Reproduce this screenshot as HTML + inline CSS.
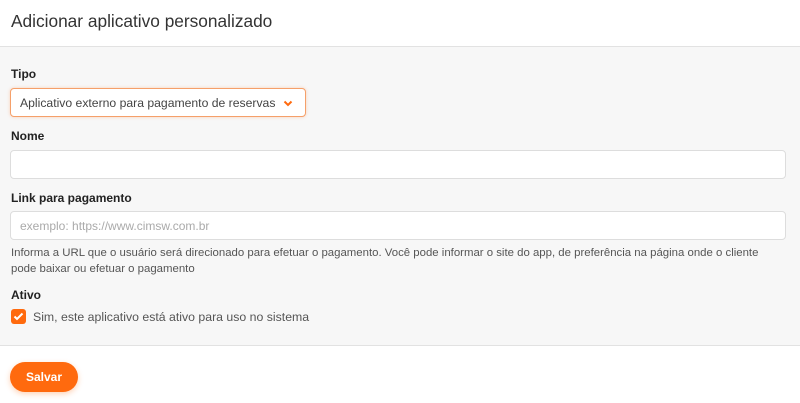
<!DOCTYPE html>
<html><head><meta charset="utf-8"><style>
*{box-sizing:border-box;margin:0;padding:0}
body{width:800px;height:403px;background:#fff;font-family:"Liberation Sans",sans-serif;color:#222;position:relative;overflow:hidden}
.hdr{height:47px;border-bottom:1px solid #e2e2e2;padding:11px 11px;font-size:17.3px;color:#333}
.body{position:absolute;top:47px;left:0;width:800px;height:299px;background:#f7f7f7;border-bottom:1px solid #e2e2e2}
.lbl{position:absolute;left:11px;font-size:12px;font-weight:bold;color:#222}
.inp{position:absolute;left:10px;width:776px;height:29px;background:#fff;border:1px solid #ddd;border-radius:4px;font-size:12px;color:#aaa;padding:7px 9px}
.sel{position:absolute;left:10px;top:41px;width:296px;height:29px;background:#fff;border:1px solid #f5a06a;border-radius:4px;font-size:12.2px;color:#444;padding:7px 9px;box-shadow:0 0 3px rgba(255,120,40,.3)}
.help{position:absolute;left:11px;top:198px;width:770px;font-size:11.4px;color:#555;line-height:16px}
.cb{position:absolute;left:11px;top:262px;width:15px;height:15px;background:#ff6a0e;border-radius:3px}
.btn{position:absolute;left:10px;top:362px;width:68px;height:30px;background:#ff6a0e;border-radius:15px;color:#fff;font-weight:bold;font-size:12px;text-align:center;line-height:30px;box-shadow:0 2px 6px rgba(255,106,14,.3)}
</style></head><body>
<div class="hdr">Adicionar aplicativo personalizado</div>
<div class="body">
<div class="lbl" style="top:20px">Tipo</div>
<div class="sel">Aplicativo externo para pagamento de reservas
<svg style="position:absolute;right:12px;top:11px" width="10" height="7" viewBox="0 0 10 7"><path d="M1.5 1.5L5 5 8.5 1.5" fill="none" stroke="#ff6a0e" stroke-width="2"/></svg></div>
<div class="lbl" style="top:82px">Nome</div>
<div class="inp" style="top:103px"></div>
<div class="lbl" style="top:144px">Link para pagamento</div>
<div class="inp" style="top:164px">exemplo: https://www.cimsw.com.br</div>
<div class="help">Informa a URL que o usuário será direcionado para efetuar o pagamento. Você pode informar o site do app, de preferência na página onde o cliente pode baixar ou efetuar o pagamento</div>
<div class="lbl" style="top:241px">Ativo</div>
<div class="cb"><svg width="15" height="15" viewBox="0 0 15 15"><path d="M3.5 7.5L6 10 11.5 4.5" fill="none" stroke="#fff" stroke-width="2"/></svg></div>
<div style="position:absolute;left:33px;top:263px;font-size:12.3px;color:#555">Sim, este aplicativo está ativo para uso no sistema</div>
</div>
<div class="btn">Salvar</div>
</body></html>
